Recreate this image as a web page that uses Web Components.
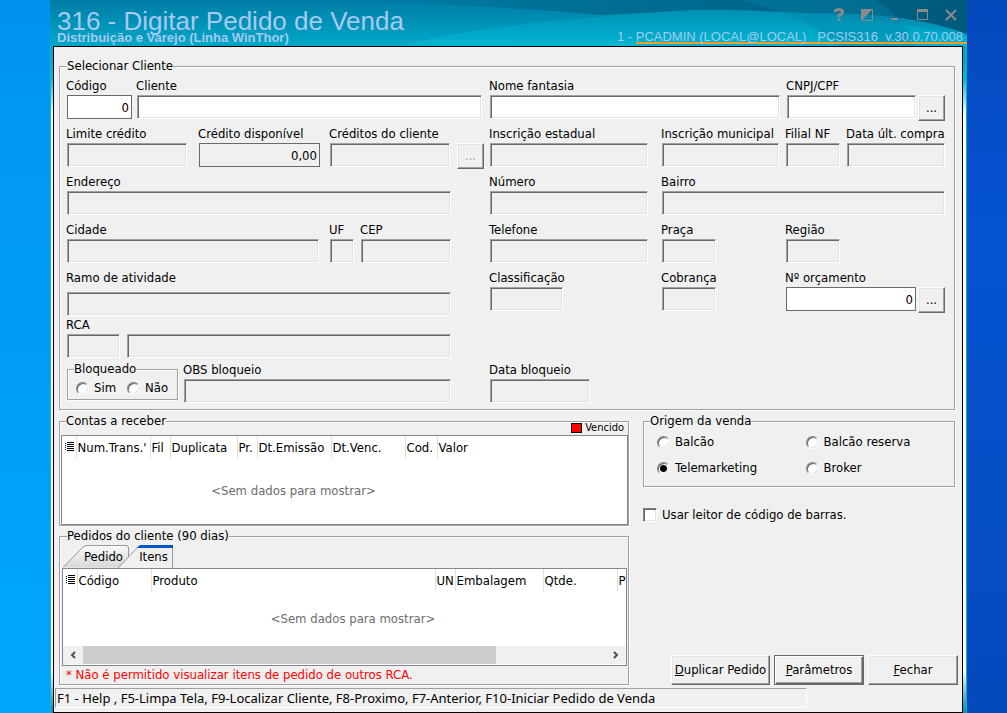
<!DOCTYPE html>
<html lang="pt-BR">
<head>
<meta charset="utf-8">
<title>316 - Digitar Pedido de Venda</title>
<style>
html, body { margin: 0; }
body { font: 13px/16px "DejaVu Sans Condensed", "DejaVu Sans", sans-serif; color: #000; }
</style>
</head>
<body>
<wt-desktop></wt-desktop>
<script>
const define = (name, html, setup) => {
  const tpl = document.createElement('template');
  tpl.innerHTML = html;
  customElements.define(name, class extends HTMLElement {
    constructor() { super(); this.attachShadow({ mode: 'open' }); }
    connectedCallback() {
      if (this.shadowRoot.childNodes.length) return;
      this.shadowRoot.append(tpl.content.cloneNode(true));
      if (setup) setup(this, this.shadowRoot);
    }
  });
};

/* Labelled text box: sunken by default, "flat" for numeric boxes, "locked" for read-only ones. */
define('wt-field', `
<style>
:host { display: block; min-width: 0; padding-right: var(--gap, 7px); }
label { display: block; height: 18px; line-height: 18px; margin-left: -1px; white-space: nowrap; }
input { display: block; box-sizing: border-box; width: 100%; height: 24px; margin: 0; padding: 0 4px; border-radius: 0; outline: 0;
  font: inherit; color: #000; background: #fff; border: 1px solid; border-color: #a0a0a0 #fff #fff #a0a0a0;
  box-shadow: inset 1px 1px #696969, inset -1px -1px #e3e3e3; }
:host([locked]) input { background: #f0f0f0; }
:host([flat]) input { border-color: #6a6a6a; box-shadow: none; text-align: right; padding-right: 2px; }
:host([spaced]) label { margin-bottom: 5px; }
</style>
<label for="box"></label><input id="box" type="text">`, (host, root) => {
  const box = root.querySelector('input'), label = root.querySelector('label');
  if (host.hasAttribute('label')) label.textContent = host.getAttribute('label');
  if (host.hasAttribute('name')) box.setAttribute('aria-label', host.getAttribute('name'));
  box.value = host.getAttribute('value') || '';
  box.readOnly = host.hasAttribute('locked');
});

define('wt-button', `
<style>
:host { display: block; }
button { display: block; box-sizing: border-box; width: 100%; height: 100%; margin: 0; padding: 0; font: inherit; color: #000; background: #f0f0f0; border-radius: 0;
  border: 1px solid; border-color: #fff #696969 #696969 #fff; box-shadow: inset -1px -1px #a0a0a0, inset 1px 1px #e3e3e3; white-space: nowrap; }
:host([default]) button { border-color: #696969; box-shadow: inset 1px 1px #fff, inset -1px -1px #696969, inset -2px -2px #a0a0a0; }
:host([off]) button { color: #a0a0a0; text-shadow: 1px 1px #fff; }
</style>
<button type="button"><slot></slot></button>`, (host, root) => {
  if (host.hasAttribute('off')) root.querySelector('button').disabled = true;
});

define('wt-group', `
<style>
:host { display: block; min-width: 0; }
fieldset { margin: 0; min-width: 0; padding: var(--pad, 0); border: 1px solid #a0a0a0; box-shadow: 1px 1px #fff, inset 1px 1px #fff; }
legend { padding: 0; margin-left: var(--indent, 5px); line-height: 16px; background: #f0f0f0; }
</style>
<fieldset><legend></legend><slot></slot></fieldset>`, (host, root) => {
  root.querySelector('legend').textContent = host.getAttribute('label');
});

/* Tick box or a set of radio buttons sharing one shadow root. */
define('wt-choices', `
<style>
:host { display: grid; grid-template-columns: var(--cols, auto); }
label { display: flex; align-items: center; gap: 5px; height: var(--row, 26px); white-space: nowrap; }
input { appearance: none; flex: none; box-sizing: border-box; width: 13px; height: 13px; margin: 0; border-radius: 50%; border: 1px solid; border-color: #808080 #fff #fff #808080;
  background: #fff; box-shadow: inset 1px 1px #696969, inset -1px -1px #e3e3e3; }
input:checked { background: radial-gradient(circle, #000 0 3px, #fff 4px); }
input[type=checkbox] { border-radius: 0; width: 14px; height: 14px; }
</style>`, (host, root) => {
  host.getAttribute('options').split('|').forEach(text => {
    const label = document.createElement('label'), input = document.createElement('input');
    input.type = host.getAttribute('type') || 'radio';
    input.name = 'choice';
    input.checked = text === host.getAttribute('value');
    label.append(input, text);
    root.append(label);
  });
});

define('wt-grid', `
<style>
:host { display: flex; flex-direction: column; box-sizing: border-box; height: var(--h); overflow: hidden; background: #fff; border: 1px solid #828790; }
table { border-collapse: collapse; table-layout: fixed; flex: none; }
th { height: 22px; padding: 0; font-weight: normal; text-align: left; overflow: hidden; white-space: nowrap; line-height: 24px; border-right: 1px solid #e0e0e0; }
th:last-child { border-right: 0; }
th span { display: block; overflow: hidden; height: 22px; padding-left: 1px; }
th svg { display: block; margin-left: 3px; }
td { padding: 0; height: var(--empty, 66px); text-align: center; vertical-align: middle; color: #6d6d6d; }
</style>
<table><colgroup></colgroup><thead><tr></tr></thead><tbody><tr><td></td></tr></tbody></table><slot></slot>`, (host, root) => {
  const cols = host.getAttribute('cols').split('|').map(c => c.split(':'));
  const head = root.querySelector('thead tr'), group = root.querySelector('colgroup');
  let total = 0;
  cols.forEach(([name, width], i) => {
    const col = document.createElement('col'), th = document.createElement('th'), span = document.createElement('span');
    col.style.width = width + 'px';
    total += +width;
    if (i) { span.textContent = name; th.append(span); }
    else th.innerHTML = '<svg width="10" height="10" viewBox="0 0 10 10" shape-rendering="crispEdges" fill="#000"><path d="M0 1h1v1H0zM0 3h1v1H0zM0 5h1v1H0zM0 7h1v1H0zM2 0h7v1H2zM2 2h7v1H2zM2 4h7v1H2zM2 6h7v1H2zM2 8h7v1H2z"/></svg>';
    group.append(col);
    head.append(th);
  });
  root.querySelector('table').style.width = total + 'px';
  const td = root.querySelector('td');
  td.colSpan = cols.length;
  td.textContent = '<Sem dados para mostrar>';
});

define('wt-scrollbar', `
<style>
:host { display: flex; height: 18px; background: #f0f0f0; align-items: stretch; }
button { width: 20px; padding: 0; border: 0; background: none; display: grid; place-items: center; }
.track { flex: 1; } .thumb { width: 79%; height: 100%; background: #cdcdcd; }
svg { fill: none; stroke: #505050; stroke-width: 2; }
</style>
<button type="button" aria-label="Esquerda"><svg width="8" height="8"><path d="M6 1L3 4l3 3"/></svg></button>
<div class="track"><div class="thumb"></div></div>
<button type="button" aria-label="Direita"><svg width="8" height="8"><path d="M2 1l3 3-3 3"/></svg></button>`);

define('wt-tabs', `
<style>
:host { display: flex; height: 24px; padding-left: 1px; }
button { position: relative; height: 24px; padding: 0; border: 0; background: none; font: inherit; line-height: 26px; }
svg { position: absolute; left: 0; top: 0; }
span { position: relative; }
.a { width: 66px; padding-left: 15px; }
.b { width: 46px; padding-left: 3px; }
.b svg { left: -11px; }
</style>
<button type="button" class="a" role="tab"><svg width="68" height="24"><defs><linearGradient id="g" x2="0" y2="1"><stop offset="0" stop-color="#fafafa"/><stop offset="1" stop-color="#d8d8d8"/></linearGradient></defs><path d="M0 23.500L20 3Q22 1.500 24 1.500H63Q65.500 1.500 65.500 4V23.500" fill="url(#g)" stroke="#999"/></svg><span>Pedido</span></button>
<button type="button" class="b" role="tab" aria-selected="true"><svg width="57" height="24"><path d="M0 24L20 3Q22 1.500 24 1.500H54.500V24" fill="#f0f0f0" stroke="#999"/><path d="M20 3L22 1H55V4H19z" fill="#0055c8"/></svg><span>Itens</span></button>`);

define('wt-titlebar', `
<style>
:host { display: flex; justify-content: space-between; position: relative; height: 46px; overflow: hidden; color: #a6caf0; font-family: "Liberation Sans", Arial, sans-serif; }
.art { position: absolute; inset: 0; width: 100%; height: 100%; }
.name, .side { position: relative; }
.name { padding: 7px 0 0 7px; }
h1 { margin: 0; font-size: 26px; font-weight: normal; line-height: 28px; height: 23px; white-space: nowrap; }
p { margin: 0; font-size: 13px; font-weight: bold; line-height: 15px; white-space: nowrap; }
.side { display: flex; flex-direction: column; align-items: flex-end; justify-content: space-between; }
.tools { display: flex; gap: 4px; padding: 3px 4px 0 0; }
.tools button { width: 24px; height: 24px; padding: 0; border: 0; background: none; display: grid; place-items: center; }
.user { font-size: 13px; line-height: 14px; white-space: pre; display: flex; padding-bottom: 2px; }
.user span { border-bottom: 2px solid #ff9c20; padding-right: 4px; height: 12px; line-height: 14px; }
</style>
<svg class="art" viewBox="0 0 917 46" preserveAspectRatio="none">
<defs><linearGradient id="bg" x2="0" y2="1"><stop offset="0" stop-color="#007ca6"/><stop offset="1" stop-color="#00a8c8"/></linearGradient>
<linearGradient id="dk"><stop offset="0" stop-color="#007ca6"/><stop offset="1" stop-color="#005a7c"/></linearGradient>
<linearGradient id="lt" x2="0" y2="1"><stop offset="0" stop-color="#0090b4"/><stop offset="1" stop-color="#00b6d2"/></linearGradient></defs>
<path fill="url(#bg)" d="M0 0h917v46H0z"/>
<path fill="url(#dk)" d="M300 0H917V34Q860 12 760 13Q640 10 550 15Q450 6 300 0z"/>
<path fill="url(#lt)" d="M350 46Q440 22 640 10Q780 8 917 36V46z"/>
<path fill="#0084a8" d="M690 0Q760 18 790 46H865Q850 14 825 0z" opacity=".4"/>
</svg>
<div class="name"><h1>316 - Digitar Pedido de Venda</h1><p>Distribuição e Varejo (Linha WinThor)</p></div>
<div class="side"><div class="tools">
<button type="button" aria-label="Ajuda"><svg width="10" height="14" fill="none" stroke="#8a8a8a" stroke-width="3"><path d="M1 4Q1 1.500 5 1.500Q8.500 1.500 8.500 4Q8.500 6 5 7.500V9M5 10.500V13"/></svg></button>
<button type="button" aria-label="Tema"><svg width="12" height="12"><path d="M.5.5h11v11H.5z" fill="none" stroke="#8a8a8a"/><path d="M0 0h12L0 12z" fill="#8a8a8a"/></svg></button>
<button type="button" aria-label="Minimizar"><svg width="12" height="12"><path d="M2 9h7v2H2z" fill="#8a8a8a"/></svg></button>
<button type="button" aria-label="Maximizar"><svg width="12" height="12"><path d="M.5 1.500h10v9H.5zM0 1.500h11" fill="none" stroke="#8a8a8a"/><path d="M0 0h11v3H0z" fill="#8a8a8a"/></svg></button>
<button type="button" aria-label="Fechar janela"><svg width="12" height="12" stroke="#8a8a8a" stroke-width="2"><path d="M1 1l10 10M11 1L1 11"/></svg></button>
</div><div class="user">1 - <span>PCADMIN (LOCAL@LOCAL)   PCSIS316  v.30.0.70.008</span></div></div>`);

define('wt-client', `
<style>
:host { display: block; }
.row { display: grid; margin-bottom: 6px; }
wt-button { height: 26px; margin: 18px 0 -2px; }
</style>
<wt-group label="Selecionar Cliente" style="--pad:3px 9px 0 7px;--indent:0px">
<div class="row" style="grid-template-columns:70fr 353fr 297fr 131fr 27px">
<wt-field flat label="Código" value="0" style="--gap:5px"></wt-field><wt-field label="Cliente" style="--gap:8px"></wt-field><wt-field label="Nome fantasia"></wt-field><wt-field label="CNPJ/CPF" style="--gap:2px"></wt-field><wt-button>...</wt-button></div>
<div class="row" style="grid-template-columns:132fr 131fr 127fr 33px 172fr 124fr 61fr 98fr">
<wt-field locked label="Limite crédito" style="--gap:12px"></wt-field><wt-field locked flat label="Crédito disponível" value="0,00" style="--gap:10px"></wt-field><wt-field locked label="Créditos do cliente"></wt-field><wt-button off style="width:27px">...</wt-button><wt-field locked label="Inscrição estadual" style="--gap:14px"></wt-field><wt-field locked label="Inscrição municipal"></wt-field><wt-field locked label="Filial NF"></wt-field><wt-field locked label="Data últ. compra" style="--gap:0px"></wt-field></div>
<div class="row" style="grid-template-columns:423fr 172fr 283fr">
<wt-field locked label="Endereço" style="--gap:39px"></wt-field><wt-field locked label="Número" style="--gap:14px"></wt-field><wt-field locked label="Bairro" style="--gap:0px"></wt-field></div>
<div class="row" style="grid-template-columns:263fr 31fr 129fr 172fr 124fr 159fr">
<wt-field locked label="Cidade" style="--gap:11px"></wt-field><wt-field locked label="UF"></wt-field><wt-field locked label="CEP" style="--gap:39px"></wt-field><wt-field locked label="Telefone" style="--gap:14px"></wt-field><wt-field locked label="Praça" style="--gap:70px"></wt-field><wt-field locked label="Região" style="--gap:105px"></wt-field></div>
<div class="row" style="grid-template-columns:423fr 172fr 124fr 132fr 27px;margin-bottom:0">
<wt-field locked spaced label="Ramo de atividade" style="--gap:39px"></wt-field><wt-field locked label="Classificação" style="--gap:99px"></wt-field><wt-field locked label="Cobrança" style="--gap:70px"></wt-field><wt-field flat label="Nº orçamento" value="0" style="--gap:2px"></wt-field><wt-button>...</wt-button></div>
<div class="row" style="grid-template-columns:60fr 363fr 455fr;align-items:end;margin-bottom:3px">
<wt-field locked label="RCA"></wt-field><wt-field locked name="Nome do RCA" style="--gap:39px"></wt-field></div>
<div class="row" style="grid-template-columns:117fr 306fr 455fr">
<wt-group label="Bloqueado" style="--pad:0 0 0 8px;--indent:-2px;padding-right:6px"><wt-choices options="Sim|Não" style="--cols:auto auto;--row:22px;justify-content:start;column-gap:11px"></wt-choices></wt-group><wt-field locked label="OBS bloqueio" style="--gap:39px"></wt-field><wt-field locked label="Data bloqueio" style="--gap:355px"></wt-field></div>
</wt-group>`);

define('wt-desktop', `
<style>
:host { display: block; box-sizing: border-box; min-height: 100vh; padding: 0 40px 0 50px;
  background: linear-gradient(#0092ee, #009cf6 40%, #00a6fc) left / 50px 100% no-repeat, linear-gradient(#0449bc, #0452d2 33%, #0450c8 60%, #0449bc); }
.window { display: flex; flex-direction: column; min-height: 100vh; box-sizing: border-box;
  background: linear-gradient(#1ab4c8, #1ab4c8) left / 1px 100% no-repeat, linear-gradient(#00b4c8, #00b4c8) right / 1px 100% no-repeat,
  linear-gradient(#00a8c8 0 60px, #00bcd0 78px, #fff 116px, #fff 670px, #40a8c0 700px, #0098b8 712px); }
.body { flex: 1; margin: 0 4px 0 3px; border: 1px solid #000; background: #f0f0f0; padding: 11px 4px 4px 1px; display: flex; flex-direction: column; }
.main { padding-left: 4px; }
wt-client { margin-right: 3px; }
.lower { display: grid; grid-template-columns: minmax(0,570fr) minmax(0,315fr); gap: 14px; margin-top: 3px; }
.left { display: grid; gap: 2px; }
.key { display: flex; justify-content: flex-end; align-items: center; gap: 3px; height: 14px; margin-top: -8px; padding-right: 4px; font-size: 11px; }
.key i { width: 9px; height: 8px; background: red; border: 1px solid #000; }
.note { color: red; height: 18px; line-height: 18px; padding-left: 4px; white-space: nowrap; }
.right { display: flex; flex-direction: column; }
.right wt-group { margin-right: 3px; }
.bar { display: flex; gap: 4px; justify-content: flex-end; margin-top: auto; height: 30px; }
.status { width: 83%; margin-top: 3px; height: 18px; line-height: 18px; padding-left: 1px; font-family: "Noto Sans", sans-serif; border: 1px solid; border-color: #a0a0a0 #fff #fff #a0a0a0; white-space: nowrap; }
</style>
<div class="window">
<wt-titlebar></wt-titlebar>
<div class="body">
<div class="main">
<wt-client></wt-client>
<div class="lower">
<div class="left">
<wt-group label="Contas a receber" style="--pad:0 0 0 1px"><div class="key"><i></i><span>Vencido</span></div>
<wt-grid style="--h:90px" cols=":14|Num.Trans.':74|Fil:20|Duplicata:67|Pr.:20|Dt.Emissão:74|Dt.Venc.:74|Cod.:32|Valor:88"></wt-grid></wt-group>
<wt-group label="Pedidos do cliente (90 dias)" style="--pad:0 1px 0 2px"><wt-tabs></wt-tabs>
<wt-grid style="--h:98px;--empty:55px" cols=":14|Código:74|Produto:284|UN:20|Embalagem:88|Qtde.:74|P:26"><wt-scrollbar></wt-scrollbar></wt-grid>
<div class="note">* Não é permitido visualizar itens de pedido de outros RCA.</div></wt-group>
</div>
<div class="right">
<wt-group label="Origem da venda" style="--pad:0 0 5px 13px;--indent:-7px"><wt-choices options="Balcão|Balcão reserva|Telemarketing|Broker" value="Telemarketing" style="--cols:1fr 1fr"></wt-choices></wt-group>
<wt-choices type="checkbox" options="Usar leitor de código de barras." style="--row:16px;margin-top:20px"></wt-choices>
<div class="bar"><wt-button style="width:99px"><u>D</u>uplicar Pedido</wt-button><wt-button default style="width:90px"><u>P</u>arâmetros</wt-button><wt-button style="width:90px"><u>F</u>echar</wt-button></div>
</div>
</div>
</div>
<div class="status">F1 - Help , F5-Limpa Tela, F9-Localizar Cliente, F8-Proximo, F7-Anterior, F10-Iniciar Pedido de Venda</div>
</div>
</div>`);
</script>
</body>
</html>
